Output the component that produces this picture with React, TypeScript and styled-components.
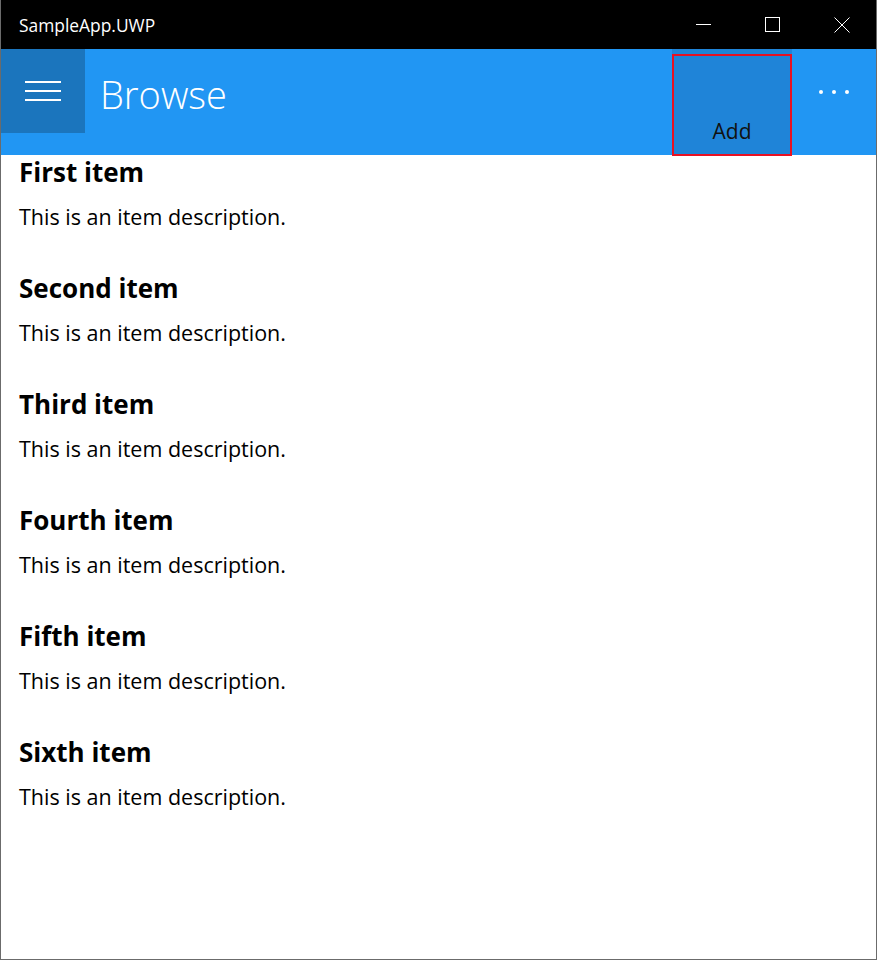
import styled, { createGlobalStyle } from "styled-components";

const items = [
  "First item",
  "Second item",
  "Third item",
  "Fourth item",
  "Fifth item",
  "Sixth item",
];

const GlobalStyle = createGlobalStyle`
  html, body {
    margin: 0;
    padding: 0;
    background: #ffffff;
  }
  body {
    font-family: "Open Sans", "Noto Sans", sans-serif;
  }
`;

export default function App() {
  return (
    <>
      <GlobalStyle />
      <Window>
        <TitleBar>
          <AppName>SampleApp.UWP</AppName>
          <Controls>
            <ControlButton aria-label="Minimize">
              <svg width="15" height="15" viewBox="0 0 15 15">
                <path d="M0 7.5H15" stroke="#fff" strokeWidth="1" />
              </svg>
            </ControlButton>
            <ControlButton aria-label="Maximize">
              <svg width="15" height="15" viewBox="0 0 15 15">
                <rect x="0.5" y="0.5" width="14" height="14" fill="none" stroke="#fff" strokeWidth="1" />
              </svg>
            </ControlButton>
            <ControlButton aria-label="Close">
              <svg width="16" height="16" viewBox="0 0 16 16">
                <path d="M0.5 0.5L15.5 15.5M15.5 0.5L0.5 15.5" stroke="#fff" strokeWidth="1" />
              </svg>
            </ControlButton>
          </Controls>
        </TitleBar>
        <Header>
          <MenuButton aria-label="Menu">
            <svg width="36" height="22" viewBox="0 0 36 22">
              <path d="M0 2H36M0 11H36M0 20H36" stroke="#fff" strokeWidth="2" />
            </svg>
          </MenuButton>
          <PageTitle>Browse</PageTitle>
          <AddButton>Add</AddButton>
          <MoreButton aria-label="More">
            <Dot />
            <Dot />
            <Dot />
          </MoreButton>
        </Header>
        <List>
          {items.map((name) => (
            <Item key={name}>
              <ItemTitle>{name}</ItemTitle>
              <ItemText>This is an item description.</ItemText>
            </Item>
          ))}
        </List>
      </Window>
    </>
  );
}

const Window = styled.div`
  box-sizing: border-box;
  width: 877px;
  height: 960px;
  border: 1px solid #6b6b6b;
  border-top: none;
  display: flex;
  flex-direction: column;
  overflow: hidden;
`;

const TitleBar = styled.div`
  height: 49px;
  background: #000;
  display: flex;
  align-items: center;
  flex-shrink: 0;
`;

const AppName = styled.div`
  margin-left: 18px;
  margin-top: 1px;
  color: #fff;
  font-size: 17.4px;
  flex: 1;
`;

const Controls = styled.div`
  display: flex;
  align-self: stretch;
`;

const ControlButton = styled.div`
  width: 69px;
  display: flex;
  align-items: center;
  justify-content: center;
`;

const Header = styled.div`
  height: 106px;
  background: #2196f3;
  display: flex;
  align-items: flex-start;
  flex-shrink: 0;
`;

const MenuButton = styled.div`
  width: 84px;
  height: 84px;
  background: #1b75bd;
  display: flex;
  align-items: center;
  justify-content: center;
`;

const PageTitle = styled.div`
  margin-left: 15px;
  margin-top: 21px;
  color: #fff;
  font-size: 38px;
  font-weight: 300;
  line-height: 48px;
  flex: 1;
`;

const AddButton = styled.div`
  box-sizing: border-box;
  width: 120px;
  height: 102px;
  margin-top: 5px;
  margin-right: 4px;
  border: 2px solid #e81123;
  background: #1f84d8;
  color: #111;
  font-size: 21px;
  display: flex;
  align-items: flex-end;
  justify-content: center;
  padding-bottom: 9px;
  box-shadow: 0 -5px 0 #1f84d8;
`;

const MoreButton = styled.div`
  width: 76px;
  height: 86px;
  margin-right: 4px;
  display: flex;
  align-items: center;
  justify-content: center;
  gap: 9px;
`;

const Dot = styled.span`
  width: 4px;
  height: 4px;
  border-radius: 50%;
  background: #fff;
`;

const List = styled.div`
  padding-left: 18px;
  display: flex;
  flex-direction: column;
`;

const Item = styled.div`
  height: 116px;
`;

const ItemTitle = styled.div`
  font-size: 26px;
  font-weight: 700;
  line-height: 34px;
  color: #000;
`;

const ItemText = styled.div`
  margin-top: 13px;
  font-size: 21.5px;
  line-height: 30px;
  color: #000;
`;
